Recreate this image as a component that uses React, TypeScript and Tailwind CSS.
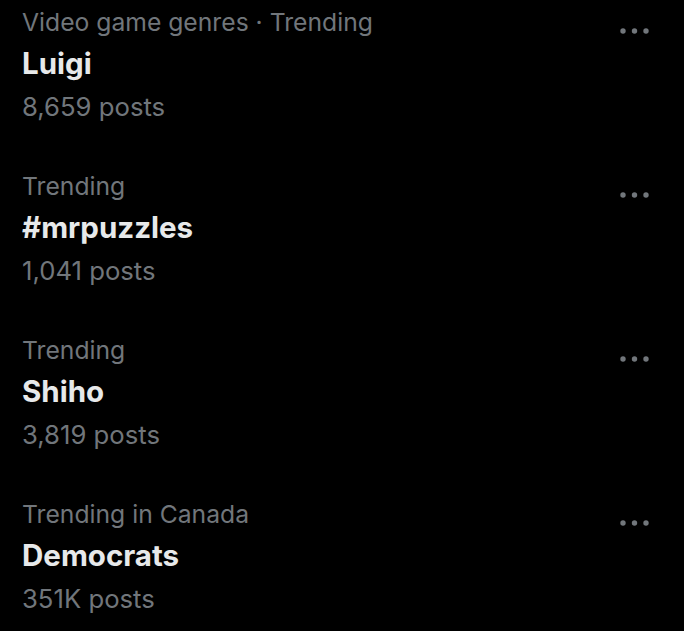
const trends = [
  { context: "Video game genres · Trending", name: "Luigi", posts: "8,659 posts" },
  { context: "Trending", name: "#mrpuzzles", posts: "1,041 posts" },
  { context: "Trending", name: "Shiho", posts: "3,819 posts" },
  { context: "Trending in Canada", name: "Democrats", posts: "351K posts" },
];

function MoreIcon() {
  return (
    <svg width="30" height="8" viewBox="0 0 30 8" fill="#71767b">
      <circle cx="3" cy="4" r="2.7" />
      <circle cx="14.5" cy="4" r="2.7" />
      <circle cx="26" cy="4" r="2.7" />
    </svg>
  );
}

export default function App() {
  return (
    <div className="h-[631px] w-[684px] overflow-hidden bg-black font-['Inter',sans-serif]">
      <div className="pt-[2px]">
        {trends.map((t) => (
          <div key={t.name} className="flex h-[164px] items-start pl-[22px] pr-[34px]">
            <div className="flex-1">
              <div className="text-[24.7px] leading-[41px] text-[#71767b]">{t.context}</div>
              <div className="text-[29.5px] font-bold leading-[41px] text-[#e7e9ea]">{t.name}</div>
              <div className="pt-[1px] text-[25.7px] leading-[43px] text-[#71767b]">{t.posts}</div>
            </div>
            <div className="pt-[25px]">
              <MoreIcon />
            </div>
          </div>
        ))}
      </div>
    </div>
  );
}
